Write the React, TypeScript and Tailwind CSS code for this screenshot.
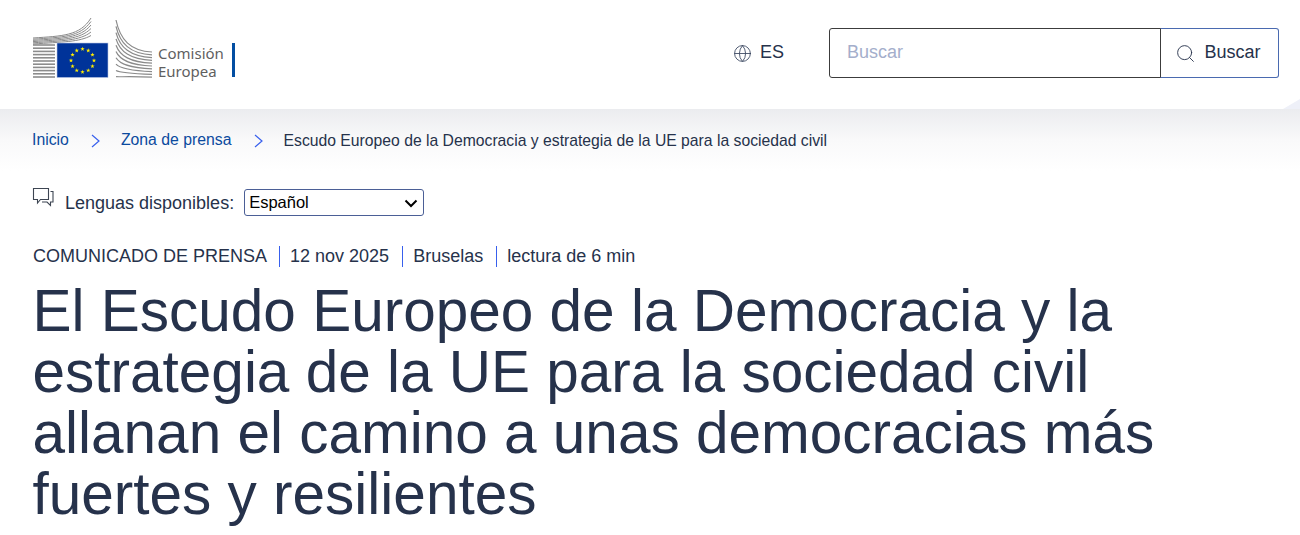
import { Globe, Search } from "lucide-react";

const stars = Array.from({ length: 12 }, (_, i) => {
  const a = (i * Math.PI) / 6;
  return { x: 82.5 + 11.5 * Math.sin(a), y: 60.5 - 11.5 * Math.cos(a) };
});

function Star({ x, y }: { x: number; y: number }) {
  const pts = Array.from({ length: 10 }, (_, i) => {
    const r = i % 2 ? 0.9 : 2.3;
    const a = (i * Math.PI) / 5;
    return `${x + r * Math.sin(a)},${y - r * Math.cos(a)}`;
  }).join(" ");
  return <polygon points={pts} fill="#ffed00" />;
}

function Logo() {
  const stripes = Array.from({ length: 11 }, (_, i) => i);
  const sweep = Array.from({ length: 6 }, (_, i) => i);
  const right = Array.from({ length: 10 }, (_, i) => i);
  return (
    <svg width="134" height="64" viewBox="32 15 134 64" className="block">
      {stripes.map((i) => (
        <path key={i} d={`M33 ${45 + i * 3.2}H55`} stroke="#8c8c8c" strokeWidth="1.6" />
      ))}
      {sweep.map((i) => {
        const y0 = 38 + i * 1.2;
        return (
          <path
            key={i}
            d={`M33 ${y0}C62 ${y0 - 2} 80 ${y0 - 2} 91 ${18 + i * 3.5}`}
            fill="none"
            stroke="#8a8a8a"
            strokeWidth="1"
          />
        );
      })}
      <rect x="57" y="43" width="51" height="34.5" fill="#003399" stroke="#b9c6e4" strokeWidth="0.6" />
      {stars.map((s, i) => (
        <Star key={i} x={s.x} y={s.y} />
      ))}
      {right.map((i) => {
        const s = 20 + i * 6.3;
        const e = 52 + i * 2.8;
        return (
          <path
            key={i}
            d={`M116 ${s}C120 ${s + (e - s) * 0.6} 130 ${e - 1} 152 ${e}`}
            fill="none"
            stroke="#8a8a8a"
            strokeWidth="1.2"
          />
        );
      })}
    </svg>
  );
}

function Crumb() {
  return (
    <svg width="9" height="14" viewBox="0 0 9 14" className="mt-[4px] ml-[22px] mr-[21px] shrink-0 fill-none stroke-[#3860ed]" strokeWidth="1.2">
      <path d="M1 1l7 6-7 6" />
    </svg>
  );
}

export default function App() {
  return (
    <div className="h-[535px] w-[1300px] overflow-hidden bg-white font-['Liberation_Sans',Arial,sans-serif] text-[#26324b]">
      <header className="relative flex h-[109px] items-start justify-between pl-8 pr-[21px]">
        <div className="mt-[15px] flex items-start">
          <Logo />
          <div className="ml-[-8px] mt-[29px] text-[15px] leading-[18px] font-['Noto_Sans',sans-serif] text-[#5f5f5f]">
            Comisión
            <br />
            Europea
          </div>
          <div className="ml-[8px] mt-[28px] h-[34px] w-[3px] bg-[#034ea2]" />
        </div>
        <div className="mt-[28px] flex items-center">
          <div className="mr-[45px] flex items-center gap-[8px] text-lg leading-none">
            <Globe className="h-[19px] w-[19px] text-[#3a4660]" strokeWidth={1.1} />
            <span className="-mt-[2px]">ES</span>
          </div>
          <div className="flex h-[50px] w-[332px] items-center rounded-l-[3px] border border-[#3c3c3c] pb-[2px] pl-[17px] text-lg text-[#a4aecb]">
            Buscar
          </div>
          <button className="-ml-px flex h-[50px] w-[119px] items-center justify-center gap-[8px] rounded-r-[3px] border border-[#4a6ab0] border-l-[#3c3c3c] pr-[3px] text-lg">
            <Search className="h-[21px] w-[21px]" strokeWidth={1.05} />
            <span className="-mt-[2px]">Buscar</span>
          </button>
        </div>
        <svg width="17" height="10" viewBox="0 0 17 10" className="absolute right-0 bottom-0 fill-[#eef0f8]">
          <path d="M0 10L17 0V10z" />
        </svg>
      </header>

      <nav className="flex h-[62px] items-start bg-gradient-to-b from-[#ebecef] via-[#f9f9fa] via-50% to-white pl-8 pt-[21px] text-[15.8px] leading-5">
        <a className="text-[#0b4a9e]">Inicio</a>
        <Crumb />
        <a className="text-[#0b4a9e]">Zona de prensa</a>
        <Crumb />
        <span className="mt-px text-[15.72px]">Escudo Europeo de la Democracia y estrategia de la UE para la sociedad civil</span>
      </nav>

      <div className="mt-[17px] flex h-[28px] items-center pl-8">
        <svg width="22" height="20" viewBox="0 0 22 20" className="-mt-[11px] mr-[11px] fill-none stroke-[#3d4552]" strokeWidth="1.1">
          <path d="M1.5 1.5h15v11h-8l-3 3.5v-3.5h-4z" />
          <path d="M18.5 4.5h2.5v10.5h-2.5v3.5l-3.5-3.5h-5" />
        </svg>
        <span className="mt-px text-lg">Lenguas disponibles:</span>
        <div className="relative ml-[10px]">
          <select className="block h-[27px] w-[180px] appearance-none rounded-[3px] border border-[#4b5f96] bg-white pl-1 text-[16.5px] text-black">
            <option>Español</option>
          </select>
          <svg width="14" height="9" viewBox="0 0 14 9" className="pointer-events-none absolute top-[10px] right-[6px] fill-none stroke-black" strokeWidth="2">
            <path d="M1.5 1.5L7 7l5.5-5.5" />
          </svg>
        </div>
      </div>

      <div className="mt-[30px] flex items-center pl-[33px] text-lg leading-[21px]">
        <span>COMUNICADO DE PRENSA</span>
        <span className="ml-[12px] border-l border-[#3860ed] pl-[10px]">12 nov 2025</span>
        <span className="ml-[13px] border-l border-[#3860ed] pl-[10px]">Bruselas</span>
        <span className="ml-[13px] border-l border-[#3860ed] pl-[10px]">lectura de 6 min</span>
      </div>

      <h1 className="mt-[13px] w-[1200px] pl-[32.5px] text-[58.5px] leading-[61px] font-normal text-[#26324b]">
        El Escudo Europeo de la Democracia y la estrategia de la UE para la sociedad civil allanan el camino a unas democracias más fuertes y resilientes
      </h1>
    </div>
  );
}
